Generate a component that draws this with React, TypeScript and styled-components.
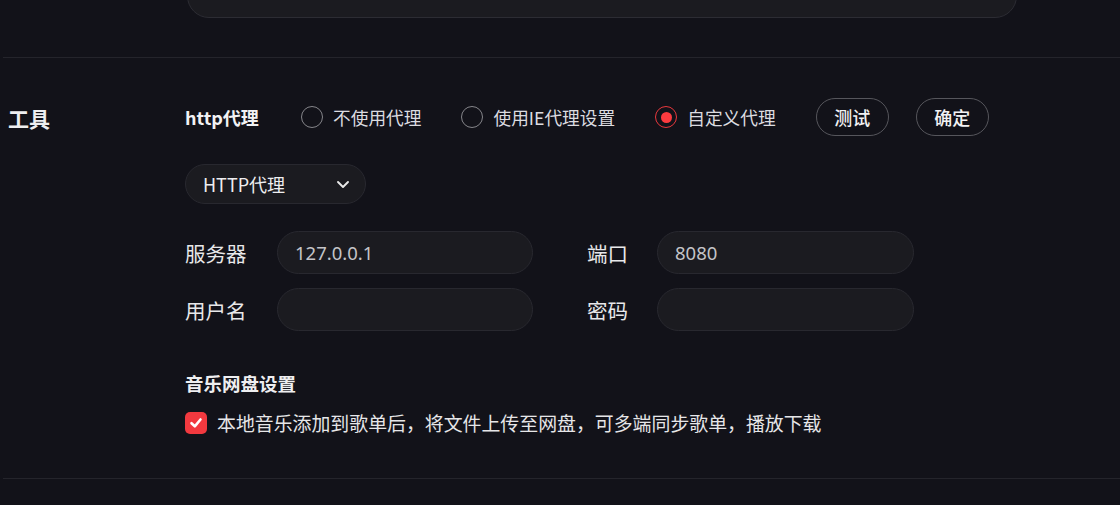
import React, { useState } from "react";
import styled, { createGlobalStyle } from "styled-components";

const GlobalStyle = createGlobalStyle`
  html, body {
    margin: 0;
    padding: 0;
    background: #121219;
    font-family: "Noto Sans CJK SC", "Noto Sans", sans-serif;
    color: #e6e6e8;
  }
  body { overflow: hidden; }
`;

type ProxyMode = "none" | "ie" | "custom";

export default function App() {
  const [mode, setMode] = useState<ProxyMode>("custom");
  const [sync, setSync] = useState(true);

  return (
    <Page>
      <GlobalStyle />
      {/* 위쪽 섹션은 스크롤로 잘려있음 */}
      <TopSection>
        <TopInput />
      </TopSection>

      <Section>
        <SectionLabel>工具</SectionLabel>
        <SectionBody>
          <ProxyRow>
            <RowTitle>http代理</RowTitle>
            <RadioGroup>
              <RadioItem onClick={() => setMode("none")}>
                <Radio $checked={mode === "none"} />
                <RadioText>不使用代理</RadioText>
              </RadioItem>
              <RadioItem onClick={() => setMode("ie")}>
                <Radio $checked={mode === "ie"} />
                <RadioText>使用IE代理设置</RadioText>
              </RadioItem>
              <RadioItem onClick={() => setMode("custom")}>
                <Radio $checked={mode === "custom"} />
                <RadioText>自定义代理</RadioText>
              </RadioItem>
            </RadioGroup>
            <Buttons>
              <OutlineButton>测试</OutlineButton>
              <OutlineButton>确定</OutlineButton>
            </Buttons>
          </ProxyRow>

          <Select>
            <span>HTTP代理</span>
            <svg width="16" height="16" viewBox="0 0 16 16" fill="none">
              <path d="M3 6 L8 11 L13 6" stroke="#e8e8e8" strokeWidth="1.9" strokeLinecap="round" strokeLinejoin="round" />
            </svg>
          </Select>

          <FormGrid>
            <FieldLabel>服务器</FieldLabel>
            <TextField defaultValue="127.0.0.1" />
            <FieldLabel>端口</FieldLabel>
            <TextField defaultValue="8080" />
            <FieldLabel>用户名</FieldLabel>
            <TextField />
            <FieldLabel>密码</FieldLabel>
            <TextField type="password" />
          </FormGrid>

          <SubTitle>音乐网盘设置</SubTitle>
          <CheckRow onClick={() => setSync(!sync)}>
            <CheckBox $checked={sync}>
              {sync && (
                <svg width="16" height="16" viewBox="0 0 16 16" fill="none">
                  <path d="M3.5 8.2 L6.8 11.3 L12.5 4.5" stroke="#fff" strokeWidth="2.6" strokeLinecap="round" strokeLinejoin="round" />
                </svg>
              )}
            </CheckBox>
            <CheckText>本地音乐添加到歌单后，将文件上传至网盘，可多端同步歌单，播放下载</CheckText>
          </CheckRow>
        </SectionBody>
      </Section>
    </Page>
  );
}

const Page = styled.div`
  width: 1120px;
  height: 505px;
  overflow: hidden;
  padding-left: 3px;
  box-sizing: border-box;
`;

const TopSection = styled.div`
  padding-left: 184px;
  padding-right: 103px;
  padding-bottom: 39px;
  border-bottom: 1px solid #24242b;
`;

const TopInput = styled.div`
  height: 44px;
  margin-top: -28px;
  border-radius: 22px;
  background: #1b1b20;
  border: 1px solid #2c2c33;
`;

const Section = styled.div`
  display: flex;
  padding: 40px 0 42px;
  border-bottom: 1px solid #24242b;
`;

const SectionLabel = styled.div`
  width: 182px;
  padding-left: 5px;
  padding-top: 7px;
  box-sizing: border-box;
  font-size: 21px;
  font-weight: 700;
  color: #eeeef0;
  line-height: 26px;
`;

const SectionBody = styled.div`
  display: flex;
  flex-direction: column;
  align-items: flex-start;
`;

const ProxyRow = styled.div`
  display: flex;
  align-items: center;
  height: 38px;
`;

const RowTitle = styled.div`
  font-size: 18px;
  font-weight: 700;
  color: #f2f2f4;
  width: 116px;
`;

const RadioGroup = styled.div`
  display: flex;
  align-items: center;
  gap: 40px;
`;

const RadioItem = styled.div`
  display: flex;
  align-items: center;
  gap: 10px;
  cursor: pointer;
`;

const Radio = styled.span<{ $checked: boolean }>`
  width: 22px;
  height: 22px;
  box-sizing: border-box;
  border-radius: 50%;
  border: 1.5px solid ${(p) => (p.$checked ? "#e8383d" : "#85858a")};
  display: flex;
  align-items: center;
  justify-content: center;
  &::after {
    content: "";
    display: ${(p) => (p.$checked ? "block" : "none")};
    width: 11px;
    height: 11px;
    border-radius: 50%;
    background: #fc3b3f;
  }
`;

const RadioText = styled.span`
  font-size: 17.7px;
  color: #dcdce0;
`;

const Buttons = styled.div`
  display: flex;
  gap: 27px;
  margin-left: 40px;
`;

const OutlineButton = styled.button`
  height: 38px;
  width: 73px;
  border-radius: 19px;
  border: 1px solid #56565c;
  background: transparent;
  color: #f2f2f4;
  font-family: "Noto Sans CJK SC", sans-serif;
  font-size: 18px;
  font-weight: 500;
  padding: 0;
  cursor: pointer;
`;

const Select = styled.div`
  margin-top: 28px;
  width: 181px;
  height: 40px;
  box-sizing: border-box;
  border-radius: 20px;
  background: #1b1b20;
  border: 1px solid #28282f;
  display: flex;
  align-items: center;
  justify-content: space-between;
  padding: 0 14px 0 17px;
  font-size: 18px;
  color: #eeeef0;
`;

const FormGrid = styled.div`
  margin-top: 27px;
  display: grid;
  grid-template-columns: 92px 256px 124px 257px;
  row-gap: 14px;
  align-items: center;
  & > :nth-child(4n + 3) {
    margin-left: 54px;
  }
`;

const FieldLabel = styled.div`
  font-size: 20.5px;
  color: #e8e8ea;
`;

const TextField = styled.input`
  height: 43px;
  box-sizing: border-box;
  border-radius: 22px;
  background: #1b1b20;
  border: 1px solid #28282f;
  padding: 0 17px;
  font-family: "Noto Sans", "Noto Sans CJK SC", sans-serif;
  font-size: 18.5px;
  color: #c4c4c8;
  outline: none;
  width: 100%;
`;

const SubTitle = styled.div`
  margin-top: 39px;
  font-size: 18.5px;
  font-weight: 700;
  color: #eeeef0;
  line-height: 26px;
`;

const CheckRow = styled.div`
  margin-top: 14px;
  display: flex;
  align-items: center;
  gap: 10px;
  cursor: pointer;
`;

const CheckBox = styled.span<{ $checked: boolean }>`
  width: 22px;
  height: 22px;
  border-radius: 5px;
  background: ${(p) => (p.$checked ? "#f2393f" : "transparent")};
  border: ${(p) => (p.$checked ? "none" : "1.5px solid #85858a")};
  display: flex;
  align-items: center;
  justify-content: center;
`;

const CheckText = styled.span`
  font-size: 18.9px;
  color: #e6e6e8;
  line-height: 26px;
`;
